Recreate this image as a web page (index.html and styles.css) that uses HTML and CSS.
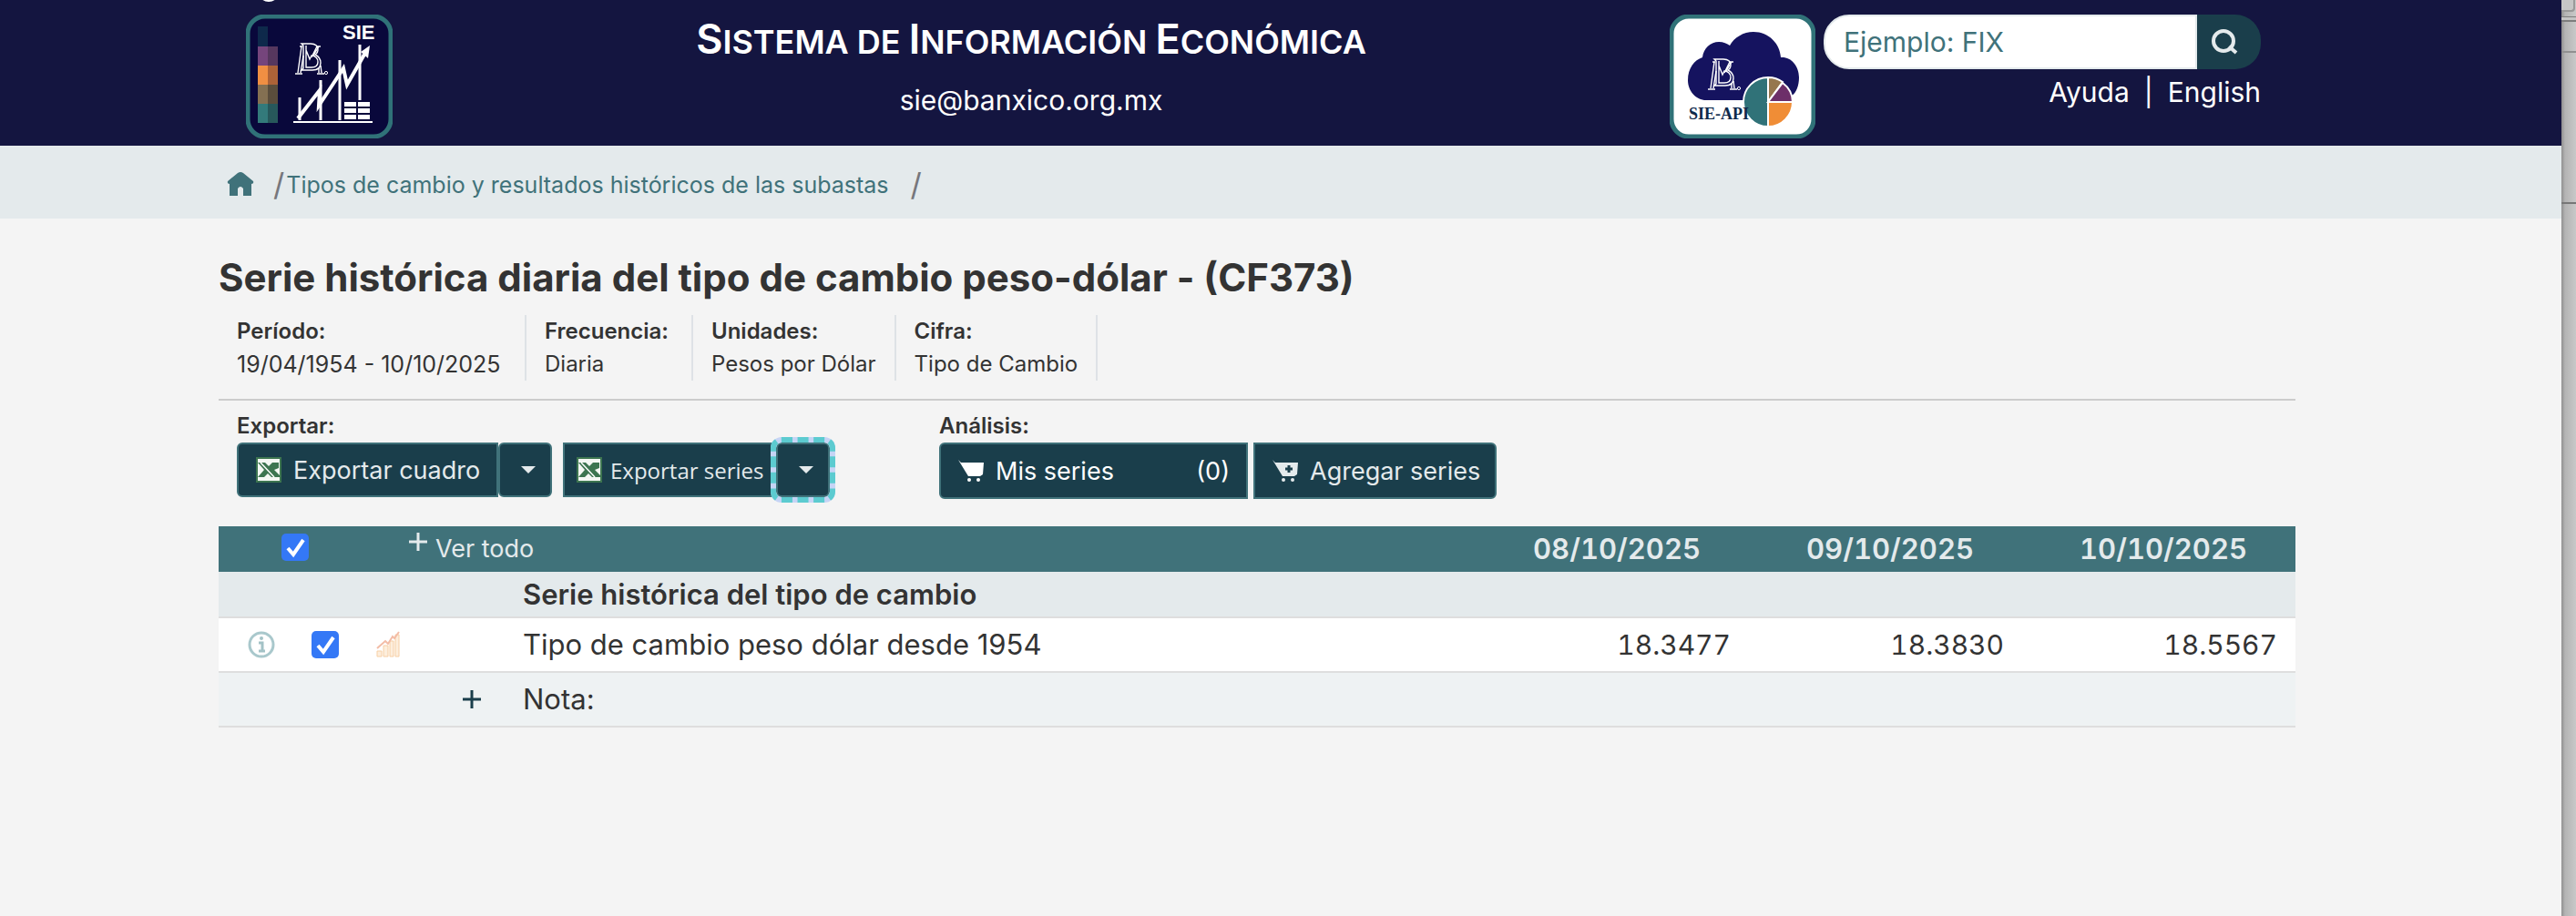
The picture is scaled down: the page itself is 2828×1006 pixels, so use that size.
FILE: index.html
```html
<!DOCTYPE html>
<html lang="es">
<head>
<meta charset="utf-8">
<meta name="viewport" content="width=device-width, initial-scale=1">
<title>Serie histórica diaria del tipo de cambio peso-dólar - (CF373)</title>
<link rel="stylesheet" href="styles.css">
</head>
<body>
<svg class="defs" aria-hidden="true">
  <symbol id="monogram" viewBox="0 0 36 36">
    <g fill="none" stroke="#fff" stroke-width="1.4">
      <path d="M7 1H17C23 1 25 4 25 8C25 11 23 12 22 13C26 15 28 18 28 22C28 28 24 30 19 30H7L9 28V3Z"/>
      <path d="M12 3V27H18C22 27 25 26 25 21C25 17 22 14 18 14L16 18L12 8"/>
      <path d="M5 4H8M7 4L3 33M9 14L6 33M0 34H8M28 4H24L18 16M26 4L20 14M28 25L29 33M26 28V33M24 34H32"/>
    </g>
    <circle cx="34" cy="33" r="1.6" fill="none" stroke="#fff"/>
  </symbol>
  <symbol id="excel" viewBox="0 0 28 28">
    <rect x="1" y="1" width="26" height="26" fill="#f4f7f3" stroke="#3d7550" stroke-width="2"/>
    <path d="M2 6H10L14 10L18 6H25V12L20 14L26 20V22H17L13 18L9 22H2L9 14Z" fill="#3d7550"/>
    <path d="M5 6L20 22" stroke="#fff" stroke-width="1.5" fill="none"/>
  </symbol>
  <symbol id="cart" viewBox="0 0 30 26">
    <path d="M1 1L4 4H29L28 17L25 19H12Z" fill="currentColor"/>
    <circle cx="13" cy="23" r="2" fill="currentColor"/><circle cx="23" cy="23" r="2" fill="currentColor"/>
  </symbol>
</svg>

<div class="screen">
  <div class="page">
    <header class="top">
      <span class="clip" aria-hidden="true"></span>
      <a class="logo" href="#" aria-label="SIE">
        <svg width="161" height="136" viewBox="0 0 161 136">
          <rect x="2" y="2" width="157" height="132" rx="19" fill="#09083b" stroke="#307278" stroke-width="5"/>
          <g>
            <path fill="#0e294b" d="M13 13H24V35H13Z"/>
            <path fill="#75457c" d="M13 35H24V56H13Z"/><path fill="#56375e" d="M24 35H35V56H24Z"/>
            <path fill="#f08f43" d="M13 56H24V77H13Z"/><path fill="#ac6238" d="M24 56H35V77H24Z"/>
            <path fill="#847052" d="M13 77H24V98H13Z"/><path fill="#5a4d3c" d="M24 77H35V98H24Z"/>
            <path fill="#337a7b" d="M13 98H24V119H13Z"/><path fill="#27585b" d="M24 98H35V119H24Z"/>
          </g>
          <text x="106" y="27" font-family="Liberation Sans, sans-serif" font-weight="700" font-size="22" fill="#fff">SIE</text>
          <use href="#monogram" x="54" y="31" width="36" height="36"/>
          <g fill="none" stroke="#fff" stroke-width="3">
            <path d="M59 91V116M82 72V116M103 50V116M125 33V94"/>
            <path d="M57 114L81 83L80 100L107 59L111 77L131 42" stroke-width="4"/>
            <path d="M52 118H139" stroke-width="2"/>
          </g>
          <path d="M136 34L126 41L134 48Z" fill="#fff"/>
          <path fill="#fff" d="M108 96h13v5h-13zM123 96h13v5h-13zM108 103h13v5h-13zM123 103h13v5h-13zM108 110h13v5h-13zM123 110h13v5h-13z"/>
        </svg>
      </a>

      <div class="brand">
        <h1 class="brand-title">S<span class="sc">ISTEMA DE </span>I<span class="sc">NFORMACIÓN </span>E<span class="sc">CONÓMICA</span></h1>
        <a class="brand-mail" href="mailto:sie@banxico.org.mx">sie@banxico.org.mx</a>
      </div>

      <div class="side">
        <a class="logo" href="#" aria-label="SIE-API">
          <svg width="160" height="136" viewBox="0 0 160 136">
            <rect x="2" y="2" width="156" height="132" rx="19" fill="#fff" stroke="#307278" stroke-width="5"/>
            <path d="M40 94C29 94 20 84 20 72C20 59 27 50 36 47C37 37 45 30 54 30C59 30 63 32 66 34C71 25 81 19 92 19C109 19 121 32 122 47C133 46 142 56 142 69C142 78 139 86 134 89L110 94Z" fill="#15135f"/>
            <use href="#monogram" x="41" y="48" width="38" height="36"/>
            <g stroke="#fff" stroke-width="2">
              <path d="M108 69A27 27 0 0 0 108 123Z" fill="#307278"/>
              <path d="M108 96V69A27 27 0 0 1 124 74Z" fill="#96774f"/>
              <path d="M108 96L124 75A27 27 0 0 1 135 96Z" fill="#6d2f69"/>
              <path d="M108 96H135A27 27 0 0 1 108 123Z" fill="#f08d36"/>
            </g>
            <text x="21" y="115" font-family="Liberation Serif, serif" font-weight="700" font-size="18" fill="#0e294b">SIE-API</text>
          </svg>
        </a>
        <div class="side-tools">
          <form class="search" role="search">
            <input class="search-box" type="search" placeholder="Ejemplo: FIX" aria-label="Buscar">
            <button class="search-go" type="button" aria-label="Buscar">
              <svg width="30" height="28" viewBox="0 0 30 28" fill="none" stroke="#e4eaec" stroke-width="4">
                <circle cx="13" cy="13" r="11"/><path d="M19 19L27 26"/>
              </svg>
            </button>
          </form>
          <nav class="links"><a href="#">Ayuda</a><span>|</span><a href="#">English</a></nav>
        </div>
      </div>
    </header>

    <nav class="crumbs" aria-label="Ruta">
      <a href="#" aria-label="Inicio">
        <svg class="home" width="30" height="27" viewBox="0 0 30 27"><path d="M12 1Q15 -1 18 1L29 10Q30 13 27 13V26H18V18Q15 14 12 18V26H3V13Q0 13 1 10Z" fill="#40727a"/></svg>
      </a>
      <span class="slash">/</span>
      <a href="#">Tipos de cambio y resultados históricos de las subastas</a>
      <span class="slash last">/</span>
    </nav>

    <main class="content">
      <h2 class="title">Serie histórica diaria del tipo de cambio peso-dólar - (CF373)</h2>
      <dl class="meta">
        <div class="period"><dt>Período:</dt><dd>19/04/1954 - 10/10/2025</dd></div>
        <div><dt>Frecuencia:</dt><dd>Diaria</dd></div>
        <div><dt>Unidades:</dt><dd>Pesos por Dólar</dd></div>
        <div><dt>Cifra:</dt><dd>Tipo de Cambio</dd></div>
      </dl>

      <div class="tools">
        <section class="group">
          <h3>Exportar:</h3>
          <div class="buttons">
            <div class="split">
              <button class="btn left cuadro" type="button"><svg width="28" height="28"><use href="#excel"/></svg>Exportar cuadro</button>
              <button class="btn caret" type="button" aria-label="Opciones de exportar cuadro"></button>
            </div>
            <div class="split">
              <button class="btn series" type="button"><svg width="28" height="28"><use href="#excel"/></svg>Exportar series</button>
              <button class="btn caret focused" type="button" aria-label="Opciones de exportar series"></button>
            </div>
          </div>
        </section>
        <section class="group analysis">
          <h3>Análisis:</h3>
          <div class="buttons">
            <button class="btn left mine" type="button"><svg width="30" height="26"><use href="#cart"/></svg>Mis series<span class="count">(0)</span></button>
            <button class="btn right add" type="button"><svg width="30" height="26"><use href="#cart"/><path d="M19 7V15M15 11H23" stroke="#1a3e4b" stroke-width="3"/></svg>Agregar series</button>
          </div>
        </section>
      </div>

      <table class="data">
        <colgroup><col class="c-info"><col class="c-check"><col class="c-icon"><col class="c-icon"><col><col class="c-date"><col class="c-date"><col class="c-date"></colgroup>
        <thead>
          <tr>
            <th class="all" colspan="2"><input class="tick" type="checkbox" checked aria-label="Seleccionar todo"></th>
            <th class="expand" colspan="3"><button class="more" type="button"><svg width="20" height="20" viewBox="0 0 20 20"><path d="M10 0V20M0 10H20" stroke="currentColor" stroke-width="3"/></svg>Ver todo</button></th>
            <th class="date">08/10/2025</th><th class="date">09/10/2025</th><th class="date">10/10/2025</th>
          </tr>
        </thead>
        <tbody>
          <tr class="section"><td colspan="4"></td><th class="name" scope="rowgroup" colspan="4">Serie histórica del tipo de cambio</th></tr>
          <tr class="row">
            <td class="mid"><a href="#" aria-label="Información"><svg width="32" height="30" viewBox="0 0 32 30"><circle cx="16" cy="15" r="13" fill="none" stroke="#a9c8cc" stroke-width="3"/><circle cx="16" cy="8" r="2" fill="#a3c2c6"/><path d="M13 13H17V21M13 22H20" fill="none" stroke="#a3c2c6" stroke-width="3"/></svg></a></td>
            <td class="mid"><input class="tick" type="checkbox" checked aria-label="Tipo de cambio peso dólar desde 1954"></td>
            <td class="mid"><a href="#" aria-label="Gráfica"><svg width="26" height="30" viewBox="0 0 26 30"><path d="M1 22H6V28H1ZM8 16H13V28H8ZM15 11H19V28H15ZM21 4H25V28H21Z" fill="#fdeedd" stroke="#f7cfa4"/><path d="M1 19L10 11L13 14L18 6L20 8L25 1" fill="none" stroke="#f3bca6" stroke-width="2"/></svg></a></td>
            <td></td>
            <td class="name">Tipo de cambio peso dólar desde 1954</td>
            <td class="num">18.3477</td><td class="num">18.3830</td><td class="num">18.5567</td>
          </tr>
          <tr class="row note">
            <td colspan="3"></td>
            <td class="mid"><button class="plus" type="button" aria-label="Mostrar nota"><svg width="20" height="20" viewBox="0 0 20 20"><path d="M10 0V20M0 10H20" stroke="currentColor" stroke-width="3"/></svg></button></td>
            <td class="name" colspan="4">Nota:</td>
          </tr>
        </tbody>
      </table>
    </main>
  </div>
  <div class="edge" aria-hidden="true"><i class="e1"></i><i class="e2"></i><i class="e3"></i><i class="e4"></i></div>
</div>
</body>
</html>
```
FILE: styles.css
```css
* { box-sizing: border-box; }
body {
  margin: 0;
  font-family: Inter, "Liberation Sans", sans-serif;
  color: #333;
  background: #f4f4f4;
}
a { color: inherit; text-decoration: none; }
h1, h2, h3, dl, dd { margin: 0; }
button { font: inherit; color: inherit; background: none; border: 0; padding: 0; }
svg { display: block; flex: none; }
.defs { display: none; }

.screen { display: grid; grid-template-columns: minmax(0, 1fr) 16px; min-height: 100vh; }

/* Header */
.top {
  position: relative;
  display: flex;
  justify-content: space-between;
  align-items: flex-start;
  min-height: 160px;
  padding: 16px 330px 8px 270px;
  background: #141540;
  color: #fff;
  overflow: hidden;
}
.clip {
  position: absolute;
  left: 284px;
  top: -18px;
  width: 22px;
  height: 20px;
  border-radius: 50%;
  background: #fff;
}
.brand { text-align: center; }
.brand-title { font-size: 45px; line-height: 54px; font-weight: 600; margin-bottom: 20px; }
.sc { font-size: 36px; line-height: 1; }
.brand-mail { display: block; font-size: 30px; line-height: 40px; }
.side { display: flex; gap: 9px; }
.side-tools { width: 480px; }
.search { display: flex; height: 60px; }
.search-box {
  flex: 1;
  min-width: 0;
  appearance: none;
  border: 2px solid #e4eaec;
  border-radius: 28px 0 0 28px;
  padding: 0 20px;
  font: inherit;
  font-size: 30px;
  color: #40727a;
  background: #fff;
}
.search-box::placeholder { color: #40727a; opacity: 1; }
.search-go {
  width: 70px;
  padding-left: 16px;
  border-radius: 0 28px 28px 0;
  background: #1a3e4b;
}
.links { display: flex; justify-content: flex-end; gap: 16px; margin-top: 5px; font-size: 30px; line-height: 40px; }

/* Breadcrumb */
.crumbs {
  display: flex;
  align-items: center;
  height: 80px;
  padding: 5px 292px 0 249px;
  background: #e4eaec;
  color: #40727a;
  font-size: 25px;
}
.slash { margin: 0 2px 0 21px; font-size: 34px; color: #77777c; }
.slash.last { margin-left: 24px; }

/* Content */
.content { padding: 37px 292px 0 240px; }
.title { font-size: 42px; line-height: 56px; font-weight: 700; margin-bottom: 13px; }
.meta { display: flex; padding-bottom: 20px; border-bottom: 2px solid #ccc; font-size: 24px; line-height: 36px; }
.meta > div { min-width: 183px; padding: 0 20px; border-right: 2px solid #dee2e6; }
.meta .period { min-width: 338px; }
.period dd { font-size: 25px; }
.meta dt { font-weight: 600; }

.tools { display: flex; gap: 120px; padding: 10px 20px 30px; }
.group h3 { font-size: 24px; line-height: 36px; font-weight: 600; }
.buttons { display: flex; gap: 12px; }
.analysis .buttons { gap: 6px; }
.split { display: flex; }
.btn {
  display: flex;
  align-items: center;
  height: 60px;
  border: 2px solid #40727a;
  background: #1a3e4b;
  color: #e4eaec;
  font-size: 27px;
  white-space: nowrap;
}
.analysis .btn { height: 62px; padding: 0 18px; gap: 12px; }
.left { border-radius: 6px 0 0 6px; }
.right { border-radius: 0 6px 6px 0; }
.cuadro { width: 287px; padding-left: 19px; gap: 13px; }
.series { width: 234px; padding-left: 13px; gap: 9px; font-family: "Open Sans", "Noto Sans", sans-serif; font-size: 24px; }
.mine { width: 339px; }
.mine, .mine .count { color: #fff; }
.add { width: 267px; }
.count { margin-left: auto; }
.caret { width: 59px; justify-content: center; border-radius: 6px; padding-left: 6px; }
.caret::before {
  content: "";
  border: 8px solid transparent;
  border-top-color: #e4eaec;
  border-bottom-width: 0;
}
.focused { position: relative; outline: 6px solid #c6d4f5; }
.focused::after {
  content: "";
  position: absolute;
  inset: -8px;
  border: 6px dashed #5ccbd0;
  border-radius: 12px;
}

/* Series table */
.data { width: 100%; table-layout: fixed; border-collapse: collapse; font-size: 31px; line-height: 40px; }
.data th, .data td { padding: 0; text-align: left; font-weight: 400; }
.c-info { width: 94px; }
.c-check { width: 46px; }
.c-icon { width: 92px; }
.c-date { width: 300px; }
.data thead tr { height: 50px; background: #40727a; color: #e4eaec; }
.data tbody tr { border-bottom: 2px solid #dedede; }
.data .all { padding: 0 0 5px 69px; }
.data .expand { padding-left: 69px; }
.data .date { padding-right: 53px; text-align: right; font-weight: 600; font-variant-numeric: tabular-nums; }
.section { height: 50px; background: #e4eaec; }
.row { height: 60px; background: #fff; }
.note { background: #eef2f3; }
.data .name { padding-left: 10px; }
.data .section .name { font-weight: 600; }
.data .num { padding-right: 20px; text-align: right; font-size: 30px; font-variant-numeric: tabular-nums; }
.tick {
  display: block;
  appearance: none;
  width: 30px;
  height: 30px;
  margin: 0;
  border-radius: 5px;
  background: #3478f6 url("data:image/svg+xml,%3Csvg xmlns='http://www.w3.org/2000/svg' viewBox='0 0 30 30'%3E%3Cpath d='M7 16L13 23L24 7' fill='none' stroke='white' stroke-width='4'/%3E%3C/svg%3E");
}
.mid > * { display: block; margin: 0 auto; width: fit-content; }
.mid > .tick { width: 30px; }
.more { display: flex; gap: 9px; font-size: 27px; line-height: 36px; }
.plus { color: #1a3e4b; }

/* Strip of the window behind */
.edge { position: relative; background: linear-gradient(90deg, #8f8f8f 0, #b4b4b4 4px, #c8c8c8 16px); }
.edge i { position: absolute; left: 0; right: 0; height: 2px; background: #909090; }
.edge .e1 { top: 0; height: 13px; right: 1px; background: #c6c6c6; border: solid #999; border-width: 0 2px 2px 0; border-radius: 0 0 4px 0; }
.edge .e2 { top: 18px; height: 6px; background: #c4c4c4; border: solid #7d7d7d; border-width: 1px 0 2px; }
.edge .e3 { top: 56px; }
.edge .e4 { top: 222px; background: #777; }
```
